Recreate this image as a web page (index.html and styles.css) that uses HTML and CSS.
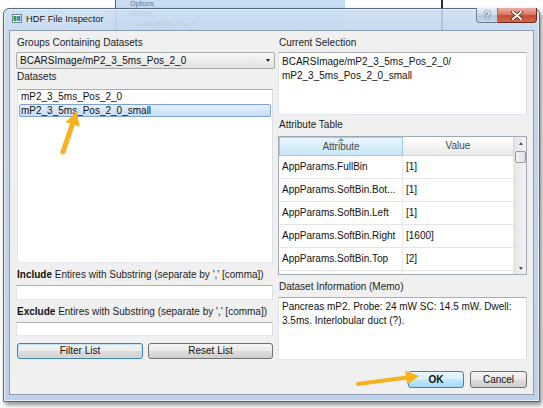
FILE: index.html
```html
<!DOCTYPE html>
<html>
<head>
<meta charset="utf-8">
<title>HDF File Inspector</title>
<link rel="stylesheet" href="styles.css">
</head>
<body>
<div class="desk">
  <div class="bg-menu">
    <div class="bg-item bg-sel">Options</div>
    <div class="bg-item">Hidden</div>
    <div class="bg-item">Coverage(Ml) 3 Ele 3</div>
  </div>
  <div class="bg-rule"></div>

  <div class="dialog">
    <div class="titlebar">
      <svg class="appicon" width="10" height="9" viewBox="0 0 10 9">
        <rect x="0.5" y="0.5" width="9" height="8" fill="#f4f8fb" stroke="#6f8196"/>
        <rect x="1.5" y="2" width="3" height="5" fill="#2f9a4c"/>
        <rect x="5" y="2" width="3.5" height="5" fill="#4a86c8"/>
      </svg>
      <span class="title">HDF File Inspector</span>
      <div class="caps">
        <div class="cap help">?</div>
        <div class="cap close">
          <svg width="12" height="9" viewBox="0 0 12 9"><path d="M2 1 L10 8 M10 1 L2 8" stroke="#4b1a12" stroke-width="3.4" stroke-linecap="round"/><path d="M2 1 L10 8 M10 1 L2 8" stroke="#ffffff" stroke-width="2" stroke-linecap="round"/></svg>
        </div>
      </div>
    </div>

    <div class="client">
      <div class="col">
        <div class="lbl">Groups Containing Datasets</div>
        <div class="combo mt3">
          <span>BCARSImage/mP2_3_5ms_Pos_2_0</span>
          <span class="drop"></span>
        </div>
        <div class="lbl mt2">Datasets</div>
        <div class="list mt6">
          <div class="item">mP2_3_5ms_Pos_2_0</div>
          <div class="item sel">mP2_3_5ms_Pos_2_0_small</div>
        </div>
        <div class="lbl mt6"><b>Include</b> Entires with Substring (separate by ',' [comma])</div>
        <div class="field h15 mt4"></div>
        <div class="lbl mt6"><b>Exclude</b> Entires with Substring (separate by ',' [comma])</div>
        <div class="field h14 mt4"></div>
        <div class="btnrow mt7">
          <div class="btn focus">Filter List</div>
          <div class="btn">Reset List</div>
        </div>
      </div>

      <div class="col">
        <div class="lbl">Current Selection</div>
        <div class="tbox mt3">BCARSImage/mP2_3_5ms_Pos_2_0/<br>mP2_3_5ms_Pos_2_0_small</div>
        <div class="lbl mt4">Attribute Table</div>
        <div class="atable mt5">
          <div class="cells">
            <div class="thead">
              <div class="th sorted"><span class="sortmark"></span>Attribute</div>
              <div class="th">Value</div>
            </div>
            <div class="tr"><div class="td">AppParams.FullBin</div><div class="td">[1]</div></div>
            <div class="tr"><div class="td">AppParams.SoftBin.Bot...</div><div class="td">[1]</div></div>
            <div class="tr"><div class="td">AppParams.SoftBin.Left</div><div class="td">[1]</div></div>
            <div class="tr"><div class="td">AppParams.SoftBin.Right</div><div class="td">[1600]</div></div>
            <div class="tr"><div class="td">AppParams.SoftBin.Top</div><div class="td">[2]</div></div>
            <div class="tr"><div class="td"></div><div class="td"></div></div>
          </div>
          <div class="vscroll">
            <div class="arr up"></div>
            <div class="thumb"></div>
            <div class="track"></div>
            <div class="arr down"></div>
          </div>
        </div>
        <div class="lbl mt6">Dataset Information (Memo)</div>
        <div class="tbox mt4">Pancreas mP2. Probe: 24 mW SC: 14.5 mW. Dwell:<br>3.5ms. Interlobular duct (?).</div>
        <div class="dlgbtns mt11">
          <div class="btn ok">OK</div>
          <div class="btn">Cancel</div>
        </div>
      </div>
    </div>
  </div>

  <svg class="annot" width="543" height="408" viewBox="0 0 543 408">
    <line x1="63" y1="152" x2="72.6" y2="123.5" stroke="#f7b21e" stroke-width="5" stroke-linecap="round"/>
    <polygon points="77,111 79.5,126.8 65.6,121.9" fill="#f7b21e"/>
    <line x1="358" y1="384" x2="407" y2="377.6" stroke="#f7b21e" stroke-width="4" stroke-linecap="round"/>
    <polygon points="419,376 407.2,384.8 405.2,370.8" fill="#f7b21e"/>
  </svg>
</div>
</body>
</html>
```

FILE: styles.css
```css
* { box-sizing: border-box; }

html, body {
  margin: 0;
  padding: 0;
}

body {
  width: 543px;
  height: 408px;
  overflow: hidden;
  background: #ffffff;
  font-family: "Liberation Sans", Arial, sans-serif;
  font-size: 10px;
  color: #1c1c1c;
}

.desk {
  position: relative;
  width: 543px;
  height: 408px;
  overflow: hidden;
}

/* content of the window behind the dialog */
.bg-menu {
  position: absolute;
  left: 115px;
  top: -1px;
  width: 230px;
  height: 34px;
  background: #e2ebf6;
  border-left: 1px solid #5d6570;
  padding-left: 10px;
  font-size: 7px;
  color: #6c7785;
}

.bg-item {
  height: 10px;
  line-height: 10px;
  padding-left: 4px;
}

.bg-sel {
  background: #c8dcf3;
  margin-left: -10px;
  padding-left: 14px;
}

.bg-rule {
  position: absolute;
  left: 441px;
  top: 0;
  width: 2px;
  height: 31px;
  background: #2a2d33;
}

/* dialog window */
.dialog {
  position: absolute;
  left: 3px;
  top: 8px;
  width: 537px;
  height: 394px;
  border: 1px solid #55687e;
  border-radius: 6px 6px 0 0;
  background: linear-gradient(180deg, rgba(200, 220, 241, 0.86) 0%, rgba(190, 211, 235, 0.9) 8%, rgba(186, 207, 232, 0.95) 100%);
  box-shadow: inset 0 0 0 1px rgba(255, 255, 255, 0.55), 2px 3px 5px rgba(0, 0, 0, 0.45);
  padding: 0 5px 6px 5px;
  display: flex;
  flex-direction: column;
}

.titlebar {
  height: 21px;
  flex: none;
  display: flex;
  align-items: flex-start;
}

.appicon {
  margin: 5px 0 0 3px;
  flex: none;
}

.title {
  margin: 4px 0 0 4px;
  font-size: 9.3px;
  line-height: 12px;
  color: #111;
  text-shadow: 0 0 4px rgba(255, 255, 255, 0.9);
}

.caps {
  margin-left: auto;
  margin-top: -1px;
  margin-right: -3px;
  display: flex;
}

.cap {
  height: 15px;
  display: flex;
  align-items: center;
  justify-content: center;
}

.help {
  width: 22px;
  border: 1px solid #6d7e94;
  border-top: none;
  border-radius: 0 0 0 4px;
  background: linear-gradient(180deg, #e4edf7 0%, #cfdcea 45%, #b5c8de 55%, #c6d7ea 100%);
  color: #f4f7fa;
  font-weight: bold;
  font-size: 11px;
  text-shadow: 0 0 2px #44505e, 0 0 1px #44505e;
}

.close {
  width: 39px;
  border: 1px solid #6b2a20;
  border-left: none;
  border-top: none;
  border-radius: 0 0 4px 0;
  background: linear-gradient(180deg, #eab0a2 0%, #dc7b68 45%, #c74a31 55%, #d26a4c 100%);
}

/* client area */
.client {
  flex: 1;
  border: 1px solid #8d9db1;
  background: #f0f0f0;
  padding: 6px 6px 0 6px;
  display: grid;
  grid-template-columns: 259px 249px;
  column-gap: 3px;
  align-items: start;
}

.col {
  display: flex;
  flex-direction: column;
}

.lbl {
  height: 12px;
  line-height: 12px;
  white-space: nowrap;
  padding-left: 1px;
}

.lbl b { color: #111; }

.mt2 { margin-top: 2px; }
.mt3 { margin-top: 3px; }
.mt4 { margin-top: 4px; }
.mt5 { margin-top: 5px; }
.mt6 { margin-top: 6px; }
.mt7 { margin-top: 7px; }
.mt11 { margin-top: 11px; }

.combo {
  height: 17px;
  border: 1px solid #a9a9a9;
  border-radius: 2px;
  background: linear-gradient(180deg, #f6f6f6 0%, #ededed 50%, #e3e3e3 100%);
  display: flex;
  align-items: center;
  padding-left: 3px;
  color: #111;
}

.drop {
  margin-left: auto;
  margin-right: 4px;
  width: 0;
  height: 0;
  border-left: 2.5px solid transparent;
  border-right: 2.5px solid transparent;
  border-top: 3px solid #222;
}

.list {
  height: 174px;
  margin-left: 1px;
  margin-right: 2px;
  background: #ffffff;
  border: 1px solid #abadb3;
  border-color: #abadb3 #dbdfe6 #e3e9ef #e2e3ea;
  padding: 1px;
}

.item {
  height: 13px;
  line-height: 12px;
  padding-left: 2px;
  color: #111;
  white-space: nowrap;
}

.item.sel {
  background: linear-gradient(180deg, #e4effd 0%, #c8ddf7 100%);
  border: 1px solid #7da2ce;
  border-radius: 2px;
  padding-left: 1px;
  line-height: 11px;
}

.field {
  background: #ffffff;
  border: 1px solid #abadb3;
  border-color: #abadb3 #dbdfe6 #e3e9ef #e2e3ea;
  margin-right: 2px;
}

.h15 { height: 15px; }
.h14 { height: 14px; }

.btnrow {
  display: grid;
  grid-template-columns: 126px 125px;
  column-gap: 5px;
  padding-left: 1px;
}

.btn {
  height: 16px;
  border: 1px solid #707070;
  border-radius: 3px;
  background: linear-gradient(180deg, #f3f3f3 0%, #ebebeb 48%, #dddddd 52%, #cfcfcf 100%);
  text-align: center;
  line-height: 14px;
  color: #111;
  white-space: nowrap;
}

.btn.focus {
  border-color: #3c7fb1;
  box-shadow: inset 0 0 0 1px #c4e3f7;
}

.tbox {
  height: 63px;
  background: #ffffff;
  border: 1px solid #abadb3;
  border-color: #abadb3 #dbdfe6 #e3e9ef #e2e3ea;
  padding: 2px 3px;
  line-height: 14px;
  white-space: nowrap;
  color: #111;
}

/* attribute table */
.atable {
  height: 139px;
  background: #ffffff;
  border: 1px solid #9fa8b3;
  display: flex;
  overflow: hidden;
}

.cells {
  flex: 1;
  display: flex;
  flex-direction: column;
  overflow: hidden;
}

.thead,
.tr {
  display: grid;
  grid-template-columns: 124px 1fr;
  flex: none;
}

.thead { height: 19px; }

.th {
  position: relative;
  text-align: center;
  line-height: 17px;
  color: #4a4a4a;
  background: linear-gradient(180deg, #ffffff 0%, #f4f4f4 50%, #eaeaea 100%);
  border-right: 1px solid #d5d5d5;
  border-bottom: 1px solid #d5d5d5;
}

.th.sorted {
  background: linear-gradient(180deg, #e9f6fd 0%, #d9eefa 50%, #c9e6f7 100%);
  border: 1px solid #98cdeb;
}

.sortmark {
  position: absolute;
  left: 50%;
  top: 0;
  margin-left: -3px;
  width: 0;
  height: 0;
  border-left: 3px solid transparent;
  border-right: 3px solid transparent;
  border-bottom: 3px solid #5d8fb4;
}

.tr { height: 23px; }

.td {
  line-height: 22px;
  padding-left: 3px;
  border-right: 1px solid #e6e6e6;
  border-bottom: 1px solid #e6e6e6;
  color: #111;
  white-space: nowrap;
  overflow: hidden;
}

.vscroll {
  width: 12px;
  flex: none;
  border-left: 1px solid #e4e4e4;
  background: linear-gradient(90deg, #e6e6e6 0%, #f3f3f3 100%);
  display: flex;
  flex-direction: column;
  align-items: center;
}

.arr {
  height: 12px;
  width: 100%;
  display: flex;
  align-items: center;
  justify-content: center;
}

.arr::after {
  content: "";
  width: 0;
  height: 0;
  border-left: 2.5px solid transparent;
  border-right: 2.5px solid transparent;
}

.arr.up::after { border-bottom: 3px solid #555; }
.arr.down::after { border-top: 3px solid #555; }

.thumb {
  margin-top: 2px;
  width: 11px;
  height: 12px;
  border: 1px solid #9a9a9a;
  border-radius: 2px;
  background: linear-gradient(90deg, #f4f4f4 0%, #e2e2e2 100%);
}

.track { flex: 1; }

.dlgbtns {
  display: flex;
  justify-content: flex-end;
  column-gap: 6px;
}

.dlgbtns .btn {
  width: 57px;
  height: 17px;
  line-height: 15px;
}

.btn.ok {
  width: 56px;
  border-color: #3c7fb1;
  background: linear-gradient(180deg, #eaf6fd 0%, #d9f0fc 48%, #bee6fd 52%, #a7d9f5 100%);
  font-weight: bold;
}

.annot {
  position: absolute;
  left: 0;
  top: 0;
  pointer-events: none;
}
```
